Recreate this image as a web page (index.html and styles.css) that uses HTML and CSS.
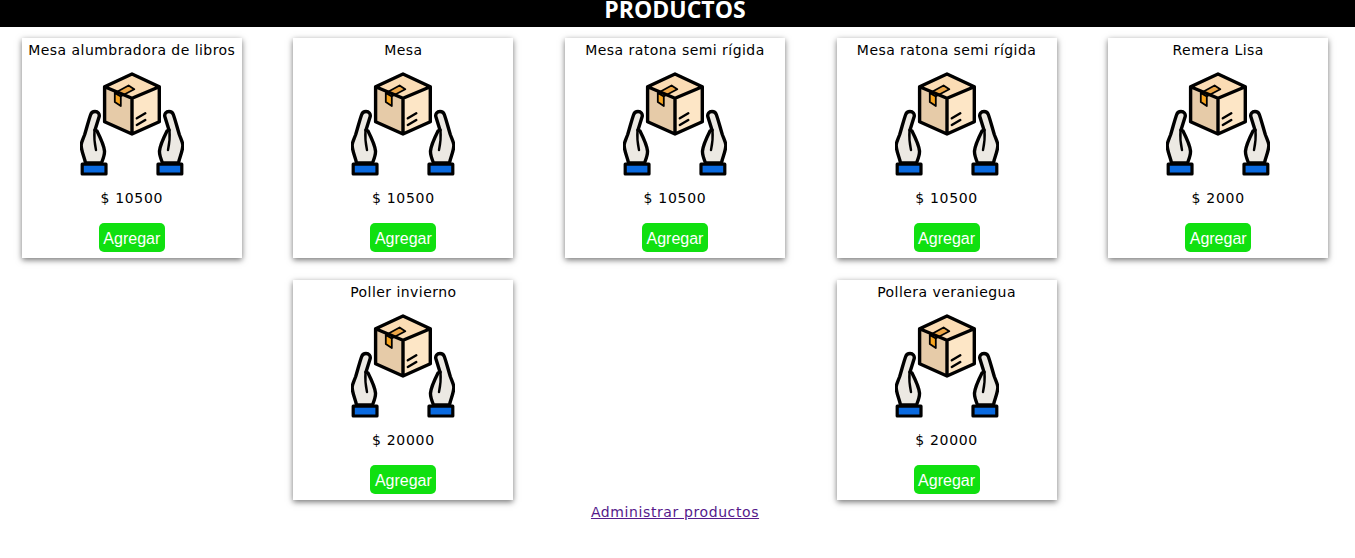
FILE: index.html
```html
<!DOCTYPE html>
<html lang="es">
<head>
<meta charset="utf-8">
<title>Productos</title>
<link rel="stylesheet" href="styles.css">
</head>
<body>
<svg class="defs" width="0" height="0" aria-hidden="true">
  <defs>
    <g id="hand">
      <path d="M15 39.500c3 0 4.700 2.300 4.200 5L15 58l2 1c3 6 7 14 7.500 20 .3 4-1.500 8-3 12H5.500C4.500 85 1 79 1.200 73c.2-3 1.800-6 3.500-10.500C6.700 56 8.700 48 10.700 42.500c.7-2 2.500-3 4.300-3z" fill="#ece9e3" stroke="#000" stroke-width="3.400" stroke-linejoin="round"/>
      <path d="M14.500 58c-.5 6 0 13 1.500 20" fill="none" stroke="#000" stroke-width="2.400" stroke-linecap="round"/>
      <rect x="2.200" y="92.200" width="23.800" height="9.800" fill="#0a6ae0" stroke="#000" stroke-width="3.200" stroke-linejoin="round"/>
    </g>
    <g id="producto">
      <g transform="translate(.3)">
        <path d="M51.700 2 79 14.700 51.700 26.300 24.300 14.700z" fill="#fbdcb4"/>
        <path d="M24.300 14.700 51.700 26.300V62L24.300 49.700z" fill="#e6cba8"/>
        <path d="M79 14.700 51.700 26.300V62L79 49.700z" fill="#fde6c6"/>
        <path d="M34.500 21 48.300 13.500 54 17.300 42 23.500 40 24.500z" fill="#eca648" stroke="#000" stroke-width="1.800" stroke-linejoin="round"/>
        <path d="M34.500 21 40.500 24.500V34L34.500 30z" fill="#f7a520" stroke="#000" stroke-width="1.800" stroke-linejoin="round"/>
        <path d="M51.700 2 79 14.700V49.700L51.700 62 24.300 49.700V14.700zM24.300 14.700 51.700 26.300 79 14.700M51.700 26.300V62" fill="none" stroke="#000" stroke-width="3.400" stroke-linejoin="round"/>
        <path d="M56.500 53 65 48M56.500 46.300 65 41.300" fill="none" stroke="#000" stroke-width="2.400" stroke-linecap="round"/>
      </g>
      <use href="#hand"/>
      <use href="#hand" transform="translate(104) scale(-1 1)"/>
    </g>
  </defs>
</svg>
<header class="barra"><h1 class="titulo">PRODUCTOS</h1></header>
<main class="grilla">
  <article class="tarjeta">
    <h2 class="nombre">Mesa alumbradora de libros</h2>
    <svg class="icono" viewBox="0 0 104 104"><use href="#producto"/></svg>
    <p class="precio">$ 10500</p>
    <button class="agregar" type="button">Agregar</button>
  </article>
  <article class="tarjeta">
    <h2 class="nombre">Mesa</h2>
    <svg class="icono" viewBox="0 0 104 104"><use href="#producto"/></svg>
    <p class="precio">$ 10500</p>
    <button class="agregar" type="button">Agregar</button>
  </article>
  <article class="tarjeta">
    <h2 class="nombre">Mesa ratona semi rígida</h2>
    <svg class="icono" viewBox="0 0 104 104"><use href="#producto"/></svg>
    <p class="precio">$ 10500</p>
    <button class="agregar" type="button">Agregar</button>
  </article>
  <article class="tarjeta">
    <h2 class="nombre">Mesa ratona semi rígida</h2>
    <svg class="icono" viewBox="0 0 104 104"><use href="#producto"/></svg>
    <p class="precio">$ 10500</p>
    <button class="agregar" type="button">Agregar</button>
  </article>
  <article class="tarjeta">
    <h2 class="nombre">Remera Lisa</h2>
    <svg class="icono" viewBox="0 0 104 104"><use href="#producto"/></svg>
    <p class="precio">$ 2000</p>
    <button class="agregar" type="button">Agregar</button>
  </article>
  <article class="tarjeta col-2">
    <h2 class="nombre">Poller invierno</h2>
    <svg class="icono" viewBox="0 0 104 104"><use href="#producto"/></svg>
    <p class="precio">$ 20000</p>
    <button class="agregar" type="button">Agregar</button>
  </article>
  <article class="tarjeta col-4">
    <h2 class="nombre">Pollera veraniegua</h2>
    <svg class="icono" viewBox="0 0 104 104"><use href="#producto"/></svg>
    <p class="precio">$ 20000</p>
    <button class="agregar" type="button">Agregar</button>
  </article>
</main>
<footer class="pie"><a class="enlace" href="#">Administrar productos</a></footer>
</body>
</html>
```
FILE: styles.css
```css
* { box-sizing: border-box; }
html, body { margin: 0; padding: 0; }
body {
  background: #fff;
  color: #000;
  font-family: "DejaVu Sans", sans-serif;
  font-size: 14px;
}
.defs { display: block; height: 0; }
.barra {
  background: #000;
  height: 27px;
  overflow: hidden;
  padding-right: 5px;
  text-align: center;
}
.titulo {
  margin: 0;
  color: #fff;
  font-family: "Open Sans", sans-serif;
  font-size: 23px;
  font-weight: 700;
  line-height: 18px;
}
.grilla {
  display: grid;
  grid-template-columns: repeat(5, 220px);
  column-gap: 51.6px;
  row-gap: 22px;
  padding: 11px 0 0 21.8px;
}
.col-2 { grid-column: 2; }
.col-4 { grid-column: 4; }
.tarjeta {
  display: flex;
  flex-direction: column;
  align-items: center;
  height: 220px;
  background: #fff;
  box-shadow: 0 2px 6px rgba(0, 0, 0, .55);
}
.nombre {
  margin: 0;
  height: 34px;
  font-size: 14px;
  font-weight: 400;
  line-height: 24px;
  letter-spacing: .45px;
  text-align: center;
}
.icono {
  display: block;
  width: 104px;
  height: 104px;
}
.precio {
  margin: 12px 0 0;
  height: 35px;
  line-height: 20px;
  letter-spacing: .7px;
}
.agregar {
  width: 66px;
  height: 29px;
  padding: 2px 0 0;
  border: 0;
  border-radius: 5px;
  background: #10e010;
  color: #fff;
  font-family: "Liberation Sans", Arial, sans-serif;
  font-size: 16px;
}
.pie {
  padding: 2px 5px 0 0;
  text-align: center;
  line-height: 20px;
}
.enlace { color: #551a8b; letter-spacing: .6px; }
```
